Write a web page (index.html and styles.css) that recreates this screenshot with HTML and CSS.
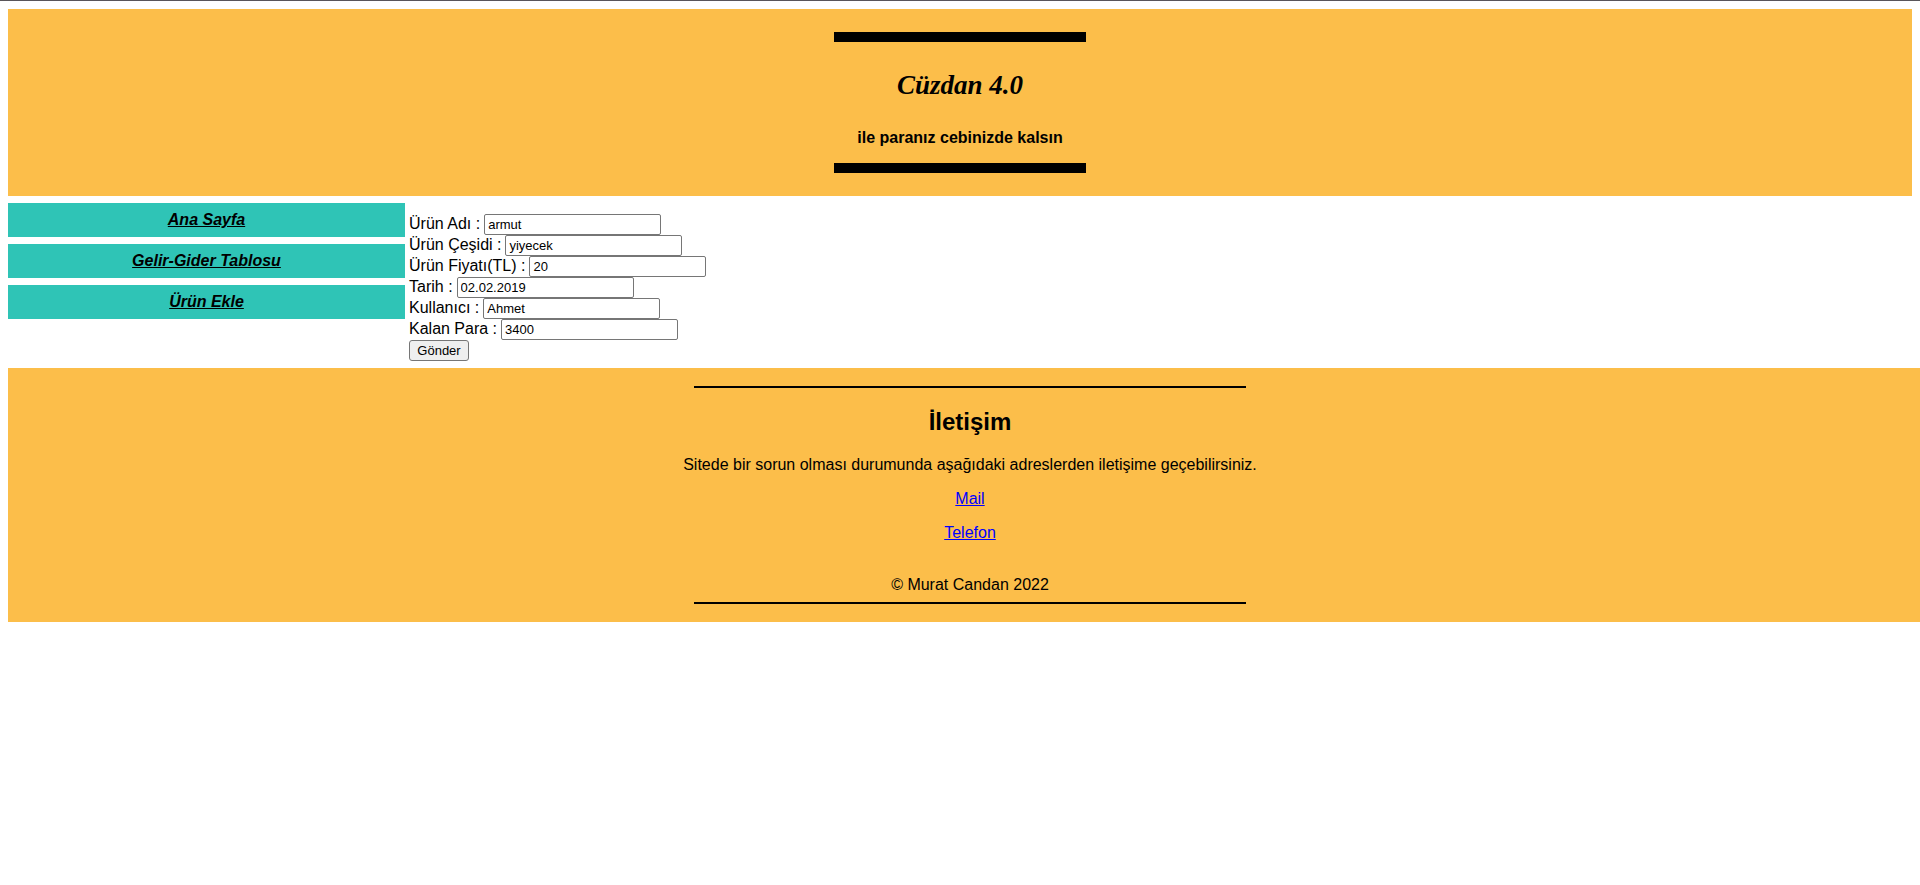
FILE: index.html
```html
<!DOCTYPE html>
<html lang="tr">
<head>
<meta charset="utf-8">
<title>Cüzdan 4.0</title>
<link rel="stylesheet" href="styles.css">
</head>
<body>
<header class="header">
  <div class="brand">
    <h1 class="brand-name">Cüzdan 4.0</h1>
    <p class="brand-slogan">ile paranız cebinizde kalsın</p>
  </div>
</header>
<div class="content">
  <nav class="menu">
    <a class="menu-link" href="#">Ana Sayfa</a>
    <a class="menu-link" href="#">Gelir-Gider Tablosu</a>
    <a class="menu-link" href="#">Ürün Ekle</a>
  </nav>
  <main>
    <form class="product-form">
      <div class="field"><label for="name">Ürün Adı :</label><input id="name" type="text" value="armut"></div>
      <div class="field"><label for="kind">Ürün Çeşidi :</label><input id="kind" type="text" value="yiyecek"></div>
      <div class="field"><label for="price">Ürün Fiyatı(TL) :</label><input id="price" type="text" value="20"></div>
      <div class="field"><label for="date">Tarih :</label><input id="date" type="text" value="02.02.2019"></div>
      <div class="field"><label for="user">Kullanıcı :</label><input id="user" type="text" value="Ahmet"></div>
      <div class="field"><label for="left">Kalan Para :</label><input id="left" type="text" value="3400"></div>
      <button class="send" type="button">Gönder</button>
    </form>
  </main>
</div>
<footer class="footer">
  <div class="contact">
    <h2 class="contact-title">İletişim</h2>
    <p class="contact-text">Sitede bir sorun olması durumunda aşağıdaki adreslerden iletişime geçebilirsiniz.</p>
    <a class="contact-link" href="#">Mail</a>
    <a class="contact-link" href="#">Telefon</a>
    <p class="copyright">© Murat Candan 2022</p>
  </div>
</footer>
</body>
</html>
```
FILE: styles.css
```css
html {
  border-top: 1px solid #59555a;
}

body {
  margin: 8px 0 8px 8px;
  background: #fff;
  color: #000;
  font: 16px/18px "Liberation Sans", Arial, sans-serif;
}

.header {
  display: flex;
  justify-content: center;
  margin-right: 8px;
  padding: 23px;
  background: #fcbe4a;
}

.brand {
  box-sizing: border-box;
  width: 252px;
  padding: 25px 0 16px;
  border: solid #000;
  border-width: 10px 0;
  text-align: center;
}

.brand-name {
  margin: 0 0 26px;
  font: italic bold 27px/36px "Yellowtail", "Liberation Serif", cursive;
}

.brand-slogan {
  margin: 0;
  font-weight: bold;
}

.content {
  display: flex;
  gap: 4px;
  padding: 7px 0;
}

.menu {
  display: flex;
  flex-direction: column;
  gap: 7px;
  width: 397px;
}

.menu-link {
  padding: 8px;
  background: #2fc4b6;
  color: #000;
  font-style: italic;
  font-weight: bold;
  text-align: center;
}

.product-form {
  padding-top: 11px;
}

.field {
  display: flex;
  gap: 4px;
  line-height: 20px;
}

.field input,
.send {
  box-sizing: border-box;
  height: 21px;
  border: 1px solid #767676;
  border-radius: 2px;
  color: #000;
  font: 13px "Liberation Sans", Arial, sans-serif;
}

.field input {
  width: 177px;
  padding: 1px 3px;
}

.send {
  display: block;
  width: 60px;
  padding: 0;
  border-radius: 3px;
  background: #efefef;
}

.footer {
  display: flex;
  justify-content: center;
  padding: 18px 0 18px 12px;
  background: #fcbe4a;
}

.contact {
  display: flex;
  flex-direction: column;
  align-items: center;
  gap: 16px;
  width: 552px;
  border: solid #000;
  border-width: 2px 0;
  white-space: nowrap;
}

.contact-title {
  margin: 20px 0 4px;
  font-size: 24px;
  line-height: 28px;
}

.contact-text {
  margin: 0;
}

.contact-link {
  color: #00f;
}

.copyright {
  margin: 18px 0 8px;
}
```
